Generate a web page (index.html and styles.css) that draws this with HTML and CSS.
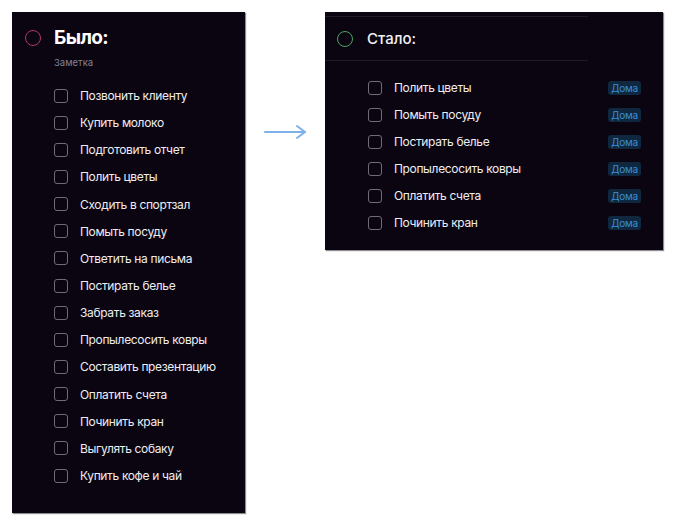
FILE: index.html
```html
<!DOCTYPE html>
<html lang="ru">

<head>
    <meta charset="UTF-8">
    <meta name="viewport" content="width=device-width, initial-scale=1.0">
    <title>Было / Стало</title>
    <link rel="stylesheet" href="styles.css">
</head>

<body>
    <div class="board">
        <!-- Before: flat list of tasks -->
        <section class="panel panel-before">
            <div class="before-header">
                <span class="status-ring ring-pink"></span>
                <h1 class="before-title">Было:</h1>
            </div>
            <div class="note-label">Заметка</div>
            <ul class="task-list list-before">
                <li class="task"><span class="checkbox"></span>Позвонить клиенту</li>
                <li class="task"><span class="checkbox"></span>Купить молоко</li>
                <li class="task"><span class="checkbox"></span>Подготовить отчет</li>
                <li class="task"><span class="checkbox"></span>Полить цветы</li>
                <li class="task"><span class="checkbox"></span>Сходить в спортзал</li>
                <li class="task"><span class="checkbox"></span>Помыть посуду</li>
                <li class="task"><span class="checkbox"></span>Ответить на письма</li>
                <li class="task"><span class="checkbox"></span>Постирать белье</li>
                <li class="task"><span class="checkbox"></span>Забрать заказ</li>
                <li class="task"><span class="checkbox"></span>Пропылесосить ковры</li>
                <li class="task"><span class="checkbox"></span>Составить презентацию</li>
                <li class="task"><span class="checkbox"></span>Оплатить счета</li>
                <li class="task"><span class="checkbox"></span>Починить кран</li>
                <li class="task"><span class="checkbox"></span>Выгулять собаку</li>
                <li class="task"><span class="checkbox"></span>Купить кофе и чай</li>
            </ul>
        </section>

        <div class="arrow-gap">
            <svg width="46" height="16" viewBox="0 0 46 16" fill="none" stroke="#7db1ea" stroke-width="2"
                stroke-linecap="round" stroke-linejoin="round">
                <path d="M3 8 H43" />
                <path d="M35 2 L43 8 L35 14" />
            </svg>
        </div>

        <!-- After: only home tasks, tagged -->
        <section class="panel panel-after">
            <div class="after-header">
                <span class="status-ring ring-green"></span>
                <h2 class="after-title">Стало:</h2>
            </div>
            <ul class="task-list list-after">
                <li class="task"><span class="checkbox"></span><span class="task-text">Полить цветы</span><span class="tag">Дома</span></li>
                <li class="task"><span class="checkbox"></span><span class="task-text">Помыть посуду</span><span class="tag">Дома</span></li>
                <li class="task"><span class="checkbox"></span><span class="task-text">Постирать белье</span><span class="tag">Дома</span></li>
                <li class="task"><span class="checkbox"></span><span class="task-text">Пропылесосить ковры</span><span class="tag">Дома</span></li>
                <li class="task"><span class="checkbox"></span><span class="task-text">Оплатить счета</span><span class="tag">Дома</span></li>
                <li class="task"><span class="checkbox"></span><span class="task-text">Починить кран</span><span class="tag">Дома</span></li>
            </ul>
        </section>
    </div>
</body>

</html>
```

FILE: styles.css
```css
* {
    margin: 0;
    padding: 0;
    box-sizing: border-box;
    font-family: Inter, "Noto Sans", sans-serif;
}

body {
    background: #fff;
}

.board {
    display: flex;
    align-items: flex-start;
    padding: 12px;
}

.panel {
    background-color: #0b0512;
    box-shadow: 1px 1px 1px rgba(0, 0, 0, 0.45);
    color: #e8e7ec;
}

.status-ring {
    width: 16px;
    height: 16px;
    border-radius: 50%;
    border: 1.5px solid;
    flex-shrink: 0;
}

.ring-pink {
    border-color: #b23565;
}

.ring-green {
    border-color: #4da35a;
}

.task-list {
    list-style: none;
}

.task {
    display: flex;
    align-items: center;
    height: 27px;
    font-size: 12px;
    letter-spacing: -0.35px;
    gap: 12px;
    color: #eeedf1;
}

.checkbox {
    width: 14px;
    height: 14px;
    border: 1.5px solid #6d6c78;
    border-radius: 3px;
    flex-shrink: 0;
}

/* left panel */
.panel-before {
    width: 233px;
    padding: 14px 0 24px;
}

.before-header {
    display: flex;
    align-items: center;
    gap: 13px;
    padding-left: 13px;
    height: 24px;
}

.before-title {
    font-size: 19px;
    font-weight: 700;
    letter-spacing: -0.6px;
    color: #fff;
    line-height: 24px;
}

.note-label {
    margin-top: 6px;
    padding-left: 42px;
    font-size: 9.5px;
    line-height: 14px;
    color: #85828f;
}

.list-before {
    margin-top: 12px;
    padding-left: 42px;
}

.list-before .task {
    height: 27.15px;
}

/* arrow between panels */
.arrow-gap {
    width: 80px;
    height: 240px;
    display: flex;
    align-items: center;
    justify-content: center;
}

/* right panel */
.panel-after {
    width: 338px;
    padding: 4px 22px 14px 0;
}

.after-header {
    display: flex;
    align-items: center;
    gap: 14px;
    width: 263px;
    height: 45px;
    padding-left: 12px;
    border-top: 1px solid #1f1b2b;
    border-bottom: 1px solid #1f1b2b;
}

.after-title {
    font-size: 15px;
    font-weight: 500;
    color: #f2f2f4;
}

.list-after {
    margin-top: 13px;
    padding-left: 43px;
}

.task-text {
    flex: 1;
}

.tag {
    font-size: 10px;
    letter-spacing: -0.2px;
    color: #3b8fd6;
    background-color: #0f2840;
    border-radius: 3px;
    padding: 1px 3px;
    line-height: 12px;
}
```
